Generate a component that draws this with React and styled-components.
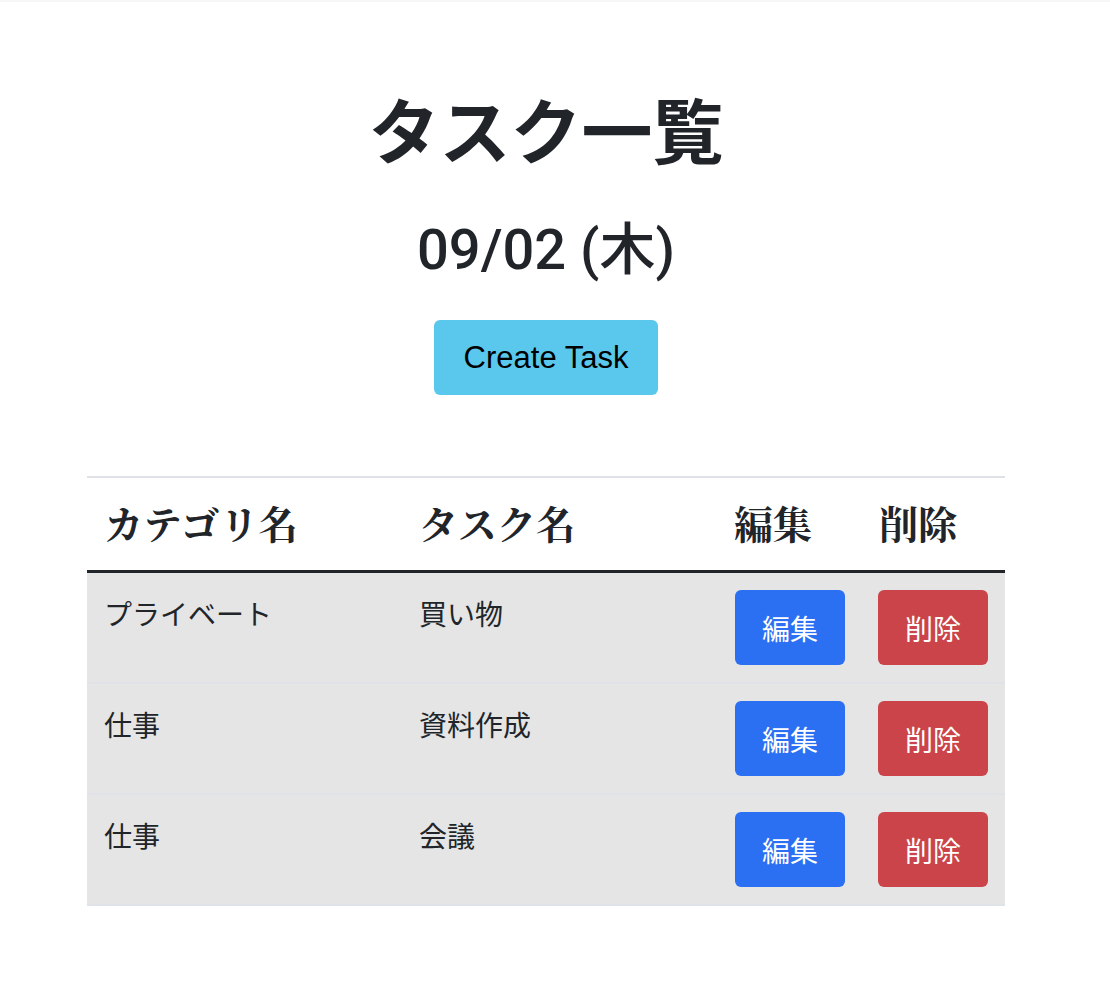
import styled, { createGlobalStyle } from 'styled-components';

const GlobalStyle = createGlobalStyle`
  html, body {
    margin: 0;
    padding: 0;
    background: #fff;
  }
  body {
    font-family: "Noto Sans CJK JP", "Noto Sans", sans-serif;
    color: #212529;
    border-top: 2px solid #f6f6f6;
  }
`;

const tasks = [
  { id: 1, category: 'プライベート', name: '買い物' },
  { id: 2, category: '仕事', name: '資料作成' },
  { id: 3, category: '仕事', name: '会議' },
];

const Page = styled.div`
  width: 1092px;
  display: flex;
  flex-direction: column;
  align-items: center;
  padding-top: 83px;
`;

const Title = styled.h1`
  margin: 0;
  font-size: 71px;
  font-weight: 700;
  line-height: 84px;
`;

const DateLabel = styled.h2`
  margin: 47px 0 0;
  font-family: "Roboto", "Noto Sans CJK JP", sans-serif;
  font-size: 56px;
  font-weight: 500;
  line-height: 68px;
`;

const Button = styled.button`
  height: 75px;
  padding: 0 27px;
  border: none;
  border-radius: 6px;
  font-family: "Noto Sans CJK JP", sans-serif;
  font-size: 28px;
  line-height: 1;
  cursor: pointer;
  color: #fff;
  background: ${(p) => p.$bg};
`;

const CreateButton = styled(Button)`
  margin-top: 36px;
  width: 224px;
  padding: 0;
  color: #000;
  font-family: "Liberation Sans", sans-serif;
  font-size: 31px;
`;

const Table = styled.table`
  margin-top: 81px;
  width: 918px;
  table-layout: fixed;
  border-collapse: collapse;
  border-top: 2px solid #dee2e6;

  th, td {
    box-sizing: border-box;
  }
`;

const HeadCell = styled.th`
  text-align: left;
  padding: 15px 17px 19px;
  font-family: "Noto Serif CJK JP", "Noto Sans CJK JP", serif;
  font-size: 39px;
  font-weight: 700;
  line-height: 58px;
  border-bottom: 3px solid #212529;
  width: ${(p) => p.$w}px;
`;

const Row = styled.tr`
  background: #e5e5e5;
  border-bottom: 2px solid #dfe2e6;
`;

const Cell = styled.td`
  padding: 19px 17px 17px;
  vertical-align: top;
  font-size: 28px;
  line-height: 42px;
`;

const ActionCell = styled(Cell)`
  padding: 17px 0 17px ${(p) => p.$left}px;
`;

export default function App() {
  return (
    <>
      <GlobalStyle />
      <Page>
        <Title>タスク一覧</Title>
        <DateLabel>09/02 (木)</DateLabel>
        <CreateButton $bg="#5ac8ec">Create Task</CreateButton>
        <Table>
          <thead>
            <tr>
              <HeadCell $w={315}>カテゴリ名</HeadCell>
              <HeadCell $w={315}>タスク名</HeadCell>
              <HeadCell $w={145}>編集</HeadCell>
              <HeadCell $w={143}>削除</HeadCell>
            </tr>
          </thead>
          <tbody>
            {tasks.map((t) => (
              <Row key={t.id}>
                <Cell>{t.category}</Cell>
                <Cell>{t.name}</Cell>
                <ActionCell $left={18}>
                  <Button $bg="#2b6ff2">編集</Button>
                </ActionCell>
                <ActionCell $left={16}>
                  <Button $bg="#cb444a">削除</Button>
                </ActionCell>
              </Row>
            ))}
          </tbody>
        </Table>
      </Page>
    </>
  );
}
